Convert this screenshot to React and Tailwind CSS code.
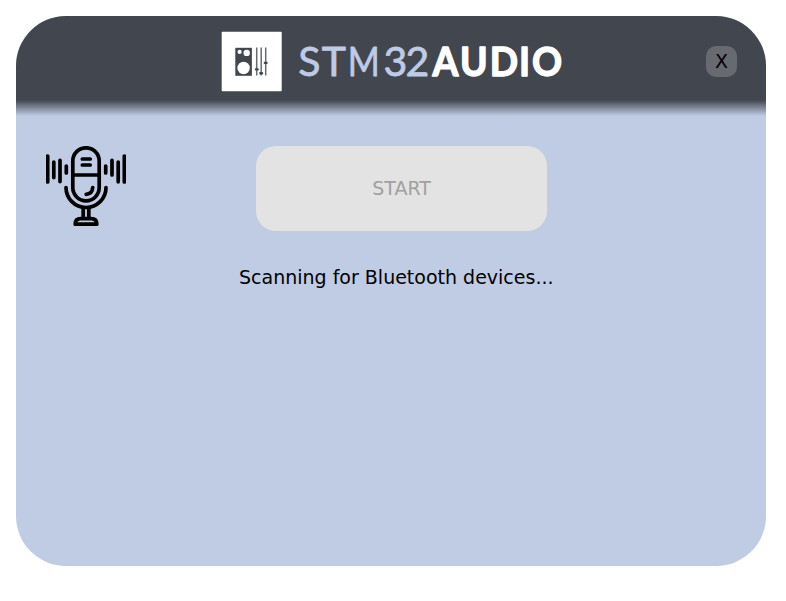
function Logo() {
  return (
    <svg width="342" height="62" viewBox="221 31 342 62" role="img" aria-label="STM32 Audio" className="shrink-0 overflow-visible">
      <rect x="221.7" y="31.7" width="60" height="59.6" rx="0.8" fill="#fff" />
      <rect x="235.3" y="47.8" width="16.6" height="28" fill="#42464f" />
      <circle cx="239.6" cy="51.9" r="2.1" fill="#fff" />
      <circle cx="246.7" cy="52.9" r="3.2" fill="#fff" />
      <circle cx="243.6" cy="68" r="6.2" fill="#fff" />
      <g stroke="#666a72" strokeWidth="1.5">
        <path d="M256.7 47.5V75.5M261.2 47.5V75.5M265.7 47.5V75.5" />
      </g>
      <g fill="#42464f">
        <rect x="254.8" y="68.2" width="4" height="2.4" rx="1" />
        <rect x="259.2" y="72" width="4" height="2.4" rx="1" />
        <rect x="263.7" y="61.7" width="4" height="2.4" rx="1" />
      </g>
      <g fontFamily="Lato, sans-serif" fontSize="41" strokeLinejoin="round">
        <text y="76" fill="#bfcae4" stroke="#bfcae4" strokeWidth="0.8">
          <tspan x="298.2 321.7">ST</tspan>
          <tspan x="347.7" textLength="32" lengthAdjust="spacingAndGlyphs">M</tspan>
          <tspan x="383.6 405.5">32</tspan>
        </text>
        <text transform="translate(432 76) scale(0.92 1)" x="0.6 30.5 62.8 94.6 108.6" y="0" fontSize="40.5" fontWeight="700" fill="#fff" stroke="#fff" strokeWidth="1.4">AUDIO</text>
      </g>
    </svg>
  );
}

function Microphone() {
  return (
    <svg width="80" height="80" viewBox="0 0 80 80" fill="none" stroke="#000" strokeWidth="3.7" strokeLinecap="round" strokeLinejoin="round">
      <path d="M1.7 10V36M7.8 16V31.6M14 14.4V35.6M20.3 20V27M59.7 20V27M66 14.4V29M72.2 16V35.8M78.3 10V36" />
      <rect x="26.8" y="1.8" width="26.4" height="53" rx="13.2" />
      <path d="M26.8 29H53.2M36.3 13H44.2M36.3 19H44.2M46.7 41.5Q46.4 47.7 40.2 48.3" />
      <path d="M20 41.5A20 20 0 0 0 60 41.5" />
      <path d="M37.2 62V72M42.8 62V72" />
      <path d="M29.2 78.2H50.8Q50.8 72.6 45.2 72.6H34.8Q29.2 72.6 29.2 78.2Z" />
    </svg>
  );
}

export default function App() {
  return (
    <div className="h-[601px] w-[786px] bg-white p-4 font-['DejaVu_Sans',sans-serif] text-black">
      <main className="h-[550px] w-[750px] overflow-hidden rounded-[50px] bg-[#c0cbe4]">
        <header className="flex h-[100px] items-start bg-[linear-gradient(to_bottom,#42464f_84px,#c0cbe4_100px)] pt-[15px] pl-[205px]">
          <Logo />
          <button className="mt-[15px] ml-[143px] flex h-[31px] w-[31px] items-center justify-center rounded-[10px] bg-[#676a71] text-[19px] leading-none">
            X
          </button>
        </header>
        <section className="flex items-start pt-[30px] pl-[30px]">
          <Microphone />
          <button disabled className="ml-[130px] h-[85px] w-[291px] rounded-[20px] bg-[#e3e3e3] text-[19px] text-[#a0a0a0]">
            START
          </button>
        </section>
        <p className="mt-[35px] pl-[223px] text-[19px] leading-[22px] whitespace-nowrap">Scanning for Bluetooth devices...</p>
      </main>
    </div>
  );
}
